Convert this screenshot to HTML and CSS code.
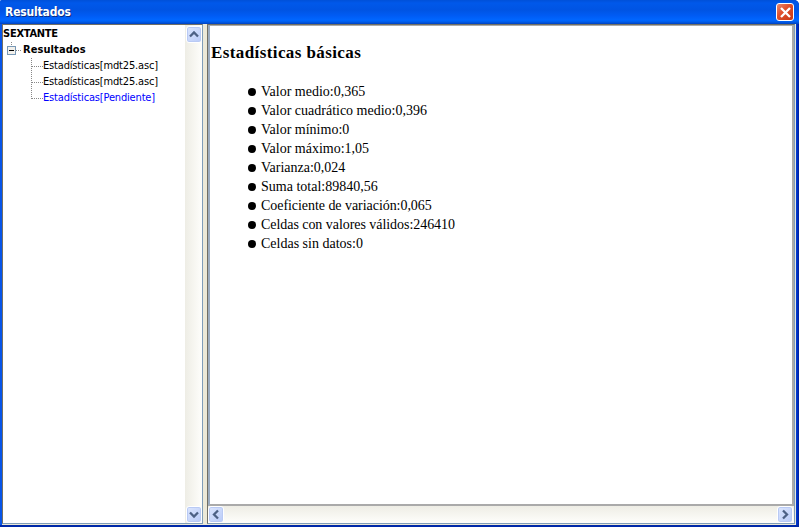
FILE: index.html
```html
<!DOCTYPE html>
<html lang="es">
<head>
<meta charset="utf-8">
<title>Resultados</title>
<link rel="stylesheet" href="styles.css">
</head>
<body>
<div class="window">
  <header class="titlebar">
    <span class="title">Resultados</span>
    <button class="close" aria-label="Cerrar"><svg width="17" height="17" viewBox="0 0 17 17"><path d="M4 4l9 9M13 4l-9 9" stroke="#fff" stroke-width="2.3"/></svg></button>
  </header>
  <main class="body">
    <nav class="tree-panel">
      <div class="tree">
        <div class="row root"><span class="sextante">SEXTANTE</span></div>
        <div class="row branch"><svg class="toggle" width="19" height="16" viewBox="0 0 19 16" shape-rendering="crispEdges"><path d="M7.5 0v4M12 8.5h6" stroke="#888" stroke-dasharray="1 1"/><rect x="3.5" y="4.5" width="8" height="8" fill="#f2f0eb" stroke="#7898b5"/><path d="M5 8.5h5" stroke="#000"/></svg><span class="results">Resultados</span></div>
        <div class="row leaf"><svg width="14" height="16" shape-rendering="crispEdges"><path d="M2.5 0v16M3 8.5h11" stroke="#888" stroke-dasharray="1 1"/></svg><span>Estadísticas[mdt25.asc]</span></div>
        <div class="row leaf"><svg width="14" height="16" shape-rendering="crispEdges"><path d="M2.5 0v16M3 8.5h11" stroke="#888" stroke-dasharray="1 1"/></svg><span>Estadísticas[mdt25.asc]</span></div>
        <div class="row leaf selected"><svg width="14" height="16" shape-rendering="crispEdges"><path d="M2.5 0v9M3 8.5h11" stroke="#888" stroke-dasharray="1 1"/></svg><span>Estadísticas[Pendiente]</span></div>
      </div>
      <div class="vbar">
        <div class="arrow"><svg width="14" height="15" viewBox="0 0 14 15"><path d="M3 9.5l4-4 4 4" fill="none" stroke="#4d6185" stroke-width="2.3"/></svg></div>
        <div class="arrow"><svg width="14" height="15" viewBox="0 0 14 15"><path d="M3 5.5l4 4 4-4" fill="none" stroke="#4d6185" stroke-width="2.3"/></svg></div>
      </div>
    </nav>
    <section class="result-panel">
      <article class="document">
        <h1>Estadísticas básicas</h1>
        <ul>
          <li>Valor medio:0,365</li>
          <li>Valor cuadrático medio:0,396</li>
          <li>Valor mínimo:0</li>
          <li>Valor máximo:1,05</li>
          <li>Varianza:0,024</li>
          <li>Suma total:89840,56</li>
          <li class="tight">Coeficiente de variación:0,065</li>
          <li class="tight">Celdas con valores válidos:246410</li>
          <li>Celdas sin datos:0</li>
        </ul>
      </article>
      <div class="hbar">
        <div class="arrow"><svg width="14" height="15" viewBox="0 0 14 15"><path d="M9 3.5l-4 4 4 4" fill="none" stroke="#4d6185" stroke-width="2.3"/></svg></div>
        <div class="arrow"><svg width="14" height="15" viewBox="0 0 14 15"><path d="M5 3.5l4 4-4 4" fill="none" stroke="#4d6185" stroke-width="2.3"/></svg></div>
      </div>
    </section>
  </main>
</div>
</body>
</html>
```
FILE: styles.css
```css
* { box-sizing: border-box; }
body { margin: 0; overflow: hidden; background: #fff; }
svg { display: block; flex: none; }
.window {
  width: 799px; height: 527px; display: flex; flex-direction: column;
  padding: 0 3px 0 2px; border-radius: 2px 5px 0 0; overflow: hidden;
  border-bottom: 2px solid #0029a8;
  background: linear-gradient(90deg, #0855e8, #0855e8 2px, #0041d8 796px, #0034c8 797px, #001f9c);
}
.titlebar {
  height: 24px; flex: none; margin: 0 -3px 0 -2px; padding: 0 5px 0 5px;
  display: flex; align-items: center; justify-content: space-between;
  background: linear-gradient(#0050d8, #0058ea 3px, #0054e3 10px, #005cf5 16px, #0066ff 20px, #005be8 22px, #0040c0 24px);
}
.title {
  font: bold 12px/24px "DejaVu Sans Condensed", "DejaVu Sans", sans-serif;
  color: #fff; text-shadow: 1px 1px #0a2c83; letter-spacing: -.18px;
}
.close {
  width: 18px; height: 18px; padding: 0; border: 1px solid #fff; border-radius: 3px;
  display: flex; align-items: center; justify-content: center;
  background: linear-gradient(135deg, #e98a72, #e0522f 40%, #c93610);
}
.body { flex: 1; min-height: 0; display: flex; background: #ece9d8; }
.tree-panel {
  width: 201px; display: flex; background: #fff;
  border: 1px solid #7f9db9; border-top-color: #716f64; border-left-color: #716f64;
  margin-bottom: 1px;
}
.tree { flex: 1; min-width: 0; padding-top: 1px; font: 11px/16px "DejaVu Sans Condensed", "DejaVu Sans", sans-serif; color: #000; }
.row { height: 16px; display: flex; align-items: center; white-space: nowrap; }
.root, .branch { font-weight: bold; }
.root { letter-spacing: -.25px; }
.branch { padding-left: 1px; letter-spacing: .08px; }
.leaf { padding-left: 26px; letter-spacing: -.17px; }
.selected { color: #00f; }
.vbar {
  width: 17px; padding: 1px 1px 0; display: flex; flex-direction: column;
  justify-content: space-between; background: linear-gradient(90deg, #eeede5, #fefefb);
}
.arrow {
  width: 16px; height: 17px; border: 1px solid #fff; border-radius: 3px;
  display: flex; align-items: center; justify-content: center;
  background: linear-gradient(135deg, #dce6fe, #b9cbf8);
  box-shadow: inset 0 0 0 1px #b9caf4;
}
.result-panel {
  flex: 1; min-width: 0; margin: 0 1px 1px 4px; display: flex; flex-direction: column;
  border: 1px solid #7f9db9; border-left-color: #716f64; border-top-color: #716f64;
}
.document {
  flex: 1; min-height: 0; padding-left: 1px; background: #fff; color: #000;
  border: 1px solid #aaa; border-right-width: 2px; border-bottom-width: 2px; border-left: 2px solid #9cacbf;
  font-family: "Liberation Serif", serif;
}
h1 { margin: 17px 0 19px; font-size: 17px; line-height: 20px; letter-spacing: .4px; white-space: nowrap; }
ul { margin: 0; padding: 0 0 0 37px; list-style: none; }
li { height: 19px; display: flex; align-items: center; font-size: 14px; line-height: 19px; white-space: nowrap; }
li::before { content: ""; width: 8px; height: 8px; margin: 1px 5px 0 0; border-radius: 50%; background: #000; }
.tight { letter-spacing: -.05px; }
.hbar {
  height: 17px; flex: none; padding: 0 1px 0 0; display: flex; align-items: center;
  justify-content: space-between; background: linear-gradient(#eeede5, #fefefb);
}
```
